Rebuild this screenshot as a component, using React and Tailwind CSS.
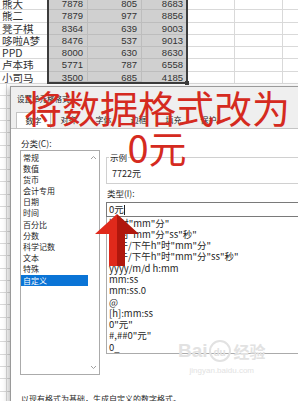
import React from 'react';

const rows = [
  ['熊大', '7878', '805', '8683'],
  ['熊二', '7879', '977', '8856'],
  ['凳子棋', '8364', '639', '9003'],
  ['哆啦A梦', '8476', '537', '9013'],
  ['PPD', '8000', '630', '8630'],
  ['卢本玮', '5771', '787', '6558'],
  ['小司马', '3500', '685', '4185'],
];

const categories = ['常规', '数值', '货币', '会计专用', '日期', '时间', '百分比', '分数', '科学记数', '文本', '特殊', '自定义'];

const types = [
  'h"时"mm"分"',
  'h"时"mm"分"ss"秒"',
  '上午/下午h"时"mm"分"',
  '上午/下午h"时"mm"分"ss"秒"',
  'yyyy/m/d h:mm',
  'mm:ss',
  'mm:ss.0',
  '@',
  '[h]:mm:ss',
  '0"元"',
  '#,##0"元"',
  '0_',
];

const tabs = ['数字', '对齐', '字体', '边框', '填充', '保护'];

function Sheet() {
  const empty = Array.from({ length: 26 });
  return (
    <div className="-mt-[2px] font-['Liberation_Sans','Noto_Sans_CJK_SC',sans-serif] text-[#333]">
      {rows.map((r, i) => (
        <div key={i} className="flex h-[12.3px]">
          <div className="w-[47px] shrink-0 border-b border-[#d9d9d9] pl-[2px] text-[10.5px] leading-[12px] font-['Noto_Sans_CJK_SC',sans-serif]">
            {r[0]}
          </div>
          <div className={`relative flex w-[141px] shrink-0 border-x-2 border-[#3c3c3c] bg-[#d0d0d0] ${i === 6 ? 'border-b-2' : ''}`}>
            <div className="w-[39px] border-b border-r border-[#bdbdbd] pr-[4px] text-right text-[9.5px] leading-[12px]">{r[1]}</div>
            <div className="w-[54px] border-b border-r border-[#bdbdbd] pr-[4px] text-right text-[9.5px] leading-[12px]">{r[2]}</div>
            <div className={`flex-1 pr-[3px] text-right text-[9.5px] leading-[12px] ${i === 6 ? '' : 'border-b border-[#bdbdbd]'}`}>{r[3]}</div>
            {i === 6 && <div className="absolute -bottom-[3px] -right-[3px] h-[4px] w-[4px] bg-[#3c3c3c]" />}
          </div>
          <div className="w-[47px] shrink-0 border-b border-r border-[#d9d9d9]" />
          <div className="w-[48px] shrink-0 border-b border-r border-[#d9d9d9]" />
          <div className="flex-1 border-b border-[#d9d9d9]" />
        </div>
      ))}
      {empty.map((_, i) => (
        <div key={i} className="flex h-[12.3px]">
          <div className="w-[7px] border-b border-r border-[#d9d9d9]" />
          <div className="flex-1 border-b border-[#d9d9d9]" />
        </div>
      ))}
    </div>
  );
}

function Chevron({ up }) {
  return (
    <svg width="7" height="5" viewBox="0 0 7 5">
      <path d={up ? 'M1 4 L3.5 1.5 L6 4' : 'M1 1 L3.5 3.5 L6 1'} fill="none" stroke="#a0a0a0" strokeWidth="1" />
    </svg>
  );
}

function Dialog() {
  return (
    <div className="absolute left-[10px] top-[86px] w-[300px] h-[330px] border border-[#9a9a9a] bg-white shadow-[-2px_2px_6px_rgba(0,0,0,0.25)] font-['Noto_Sans_CJK_SC',sans-serif] text-[#262626]">
      <div className="flex h-[23px] items-center bg-[#efefef] pl-[6px] text-[7.5px]">设置单元格格式</div>
      <div className="flex h-[18px] items-end bg-[#efefef] pl-[5px]">
        {tabs.map((t, i) => (
          <div
            key={t}
            className={`h-[16px] w-[35px] text-center text-[8px] leading-[16px] ${i === 0 ? 'border border-b-0 border-[#c4c4c4] bg-white' : ''}`}
          >
            {t}
          </div>
        ))}
      </div>
      <div className="flex flex-col border-t border-[#c4c4c4] pl-[9px]">
        <div className="flex items-start">
          <div className="flex w-[80px] shrink-0 flex-col">
            <div className="mt-[9px] h-[10px] pl-[1px] text-[8.5px] leading-[10px]">分类(C):</div>
            <div className="mt-[2px] flex h-[225px] border border-[#ababab] bg-white">
              <div className="flex-1 pt-[0.5px]">
                {categories.map((c, i) => (
                  <div
                    key={c}
                    className={`h-[11.2px] pl-[2px] text-[8px] leading-[11.2px] ${i === 11 ? 'bg-[#0a74d6] text-white' : ''}`}
                  >
                    {c}
                  </div>
                ))}
              </div>
              <div className="flex w-[11px] flex-col items-center justify-between py-[4px]">
                <Chevron up />
                <Chevron />
              </div>
            </div>
          </div>
          <div className="ml-[6px] flex min-w-0 flex-1 flex-col pt-[22px]">
            <fieldset className="border border-[#d0d0d0] pb-[3px]">
              <legend className="ml-[2px] px-[1px] text-[8.5px] leading-[12px]">示例</legend>
              <div className="mt-[5px] h-[12px] pl-[5px] text-[9px] leading-[12px]">7722元</div>
            </fieldset>
            <div className="mt-[4px] h-[10px] pl-[1px] text-[8.5px] leading-[10px]">类型(I):</div>
            <div className="mt-[4px] flex h-[15px] items-center border border-[#7a7a7a] pl-[2px] text-[9.5px]">
              <span>0元</span>
              <span className="ml-[0.5px] h-[10px] w-px bg-[#222]" />
            </div>
            <div className="h-[137px] border border-t-0 border-[#ababab] pt-[0.5px]">
              {types.map((t) => (
                <div key={t} className="h-[11.3px] whitespace-nowrap pl-[2px] text-[9.5px] leading-[11.3px]">
                  {t}
                </div>
              ))}
            </div>
          </div>
        </div>
        <div className="mt-[19px] pl-[1px] text-[8px] leading-[10px]">以现有格式为基础，生成自定义的数字格式。</div>
      </div>
    </div>
  );
}

function Arrow() {
  return (
    <svg className="absolute left-[90px] top-[210px]" width="55" height="60" viewBox="0 0 55 60">
      <polygon points="27,4 5,24 19,24 19,56 27,56" fill="#e0291b" />
      <polygon points="27,4 49,24 35,24 35,56 27,56" fill="#b0170d" />
    </svg>
  );
}

function Watermark() {
  return (
    <div className="absolute left-[178px] top-[340px] flex flex-col items-center text-[#e2e2e2] font-['Liberation_Sans',sans-serif]">
      <div className="flex items-center">
        <span className="text-[19px] font-bold leading-[22px]">Bai</span>
        <span className="mx-[1px] flex h-[22px] w-[22px] items-end justify-center rounded-full border-2 border-[#e2e2e2] text-[10px] font-bold leading-[14px]">du</span>
        <span className="ml-[2px] text-[16px] font-bold leading-[22px] font-['Noto_Sans_CJK_SC',sans-serif]">经验</span>
      </div>
      <div className="mt-[4px] text-[8px] leading-[10px]">jingyan.baidu.com</div>
    </div>
  );
}

export default function App() {
  return (
    <div className="relative h-[401px] w-[298px] overflow-hidden bg-white">
      <Sheet />
      <Dialog />
      <Watermark />
      <Arrow />
      <div className="absolute left-[16px] top-[87px] w-[282px] text-center text-[38px] leading-[40px] text-[#d52a20] font-['Noto_Sans_CJK_SC',sans-serif]">
        <div>将数据格式改为</div>
        <div>0元</div>
      </div>
    </div>
  );
}
